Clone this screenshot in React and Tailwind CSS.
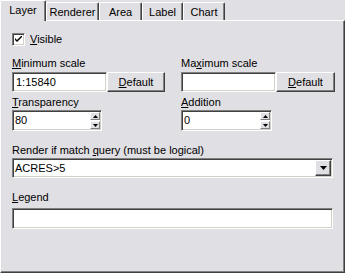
import React from 'react'

const sunken = 'border border-t-[#808080] border-l-[#808080] border-b-white border-r-white shadow-[inset_1px_1px_0_#404040,inset_-1px_-1px_0_#d4d0c8]'
const raised = 'border border-t-white border-l-white border-b-[#404040] border-r-[#404040] shadow-[inset_-1px_-1px_0_#808080]'

function U({ children }) {
  return <span className="underline underline-offset-[1px]">{children}</span>
}

function Tab({ label, active, w }) {
  if (active) {
    return (
      <div className={`relative z-10 h-[21px] ${w} bg-[#e0dfe3] border-l border-t border-l-white border-t-white border-r border-r-[#404040] shadow-[inset_-1px_0_0_#808080] rounded-tl-[2px] rounded-tr-[2px] flex justify-center pt-[3px]`}>
        {label}
      </div>
    )
  }
  return (
    <div className={`mt-[2px] h-[18px] ${w} bg-[#e0dfe3] border-l border-t border-l-white border-t-white border-r border-r-[#404040] shadow-[inset_-1px_0_0_#808080] rounded-tl-[2px] rounded-tr-[2px] flex justify-center pt-[3px]`}>
      {label}
    </div>
  )
}

function Button({ w, children }) {
  return (
    <div className={`h-[20px] ${w} bg-[#e0dfe3] ${raised} flex items-center justify-center`}>
      {children}
    </div>
  )
}

function SpinArrow({ up }) {
  return (
    <div className={`h-[8px] w-[10px] bg-[#e0dfe3] border border-t-white border-l-white border-b-[#808080] border-r-[#808080] flex items-center justify-center`}>
      <svg width="5" height="3" viewBox="0 0 5 3">
        {up ? <path d="M2.5 0 L5 3 L0 3 Z" fill="#000" /> : <path d="M0 0 L5 0 L2.5 3 Z" fill="#000" />}
      </svg>
    </div>
  )
}

function Spin({ w, value }) {
  return (
    <div className={`h-[21px] ${w} bg-white ${sunken} flex items-center pl-[2px]`}>
      <span className="flex-1">{value}</span>
      <div className="flex flex-col gap-[1px] mr-[1px]">
        <SpinArrow up />
        <SpinArrow />
      </div>
    </div>
  )
}

export default function App() {
  return (
    <div className="w-[345px] h-[273px] bg-[#e0dfe3] text-black text-[11px] leading-[13px] font-['Liberation_Sans',Arial,sans-serif] flex flex-col overflow-hidden">
      {/* Tabs */}
      <div className="flex items-start h-[21px] -mb-[1px] relative z-10">
        <Tab label="Layer" active w="w-[46px]" />
        <Tab label="Renderer" w="w-[53px]" />
        <Tab label="Area" w="w-[43px]" />
        <Tab label="Label" w="w-[41px]" />
        <Tab label="Chart" w="w-[42px]" />
      </div>

      {/* Panel */}
      <div className="flex-1 flex flex-col border border-t-white border-l-white border-r-[#404040] border-b-[#404040] shadow-[inset_-1px_-1px_0_#808080] pl-[11px]">
        <div className="mt-[12px] h-[13px] flex items-center gap-[5px]">
          <div className={`w-[13px] h-[13px] bg-white ${sunken} flex items-center justify-center`}>
            <svg width="7" height="7" viewBox="0 0 7 7">
              <path d="M0 2 L0 4 L2 6 L7 1 L7 -1 L2 4 Z" fill="#000" />
            </svg>
          </div>
          <span><U>V</U>isible</span>
        </div>

        <div className="flex mt-[11px]">
          <div className="w-[169px] flex flex-col">
            <span><U>M</U>inimum scale</span>
            <div className="flex mt-[2px]">
              <div className={`h-[20px] w-[95px] bg-white ${sunken} flex items-center pl-[3px]`}>1:15840</div>
              <Button w="w-[58px]"><span><U>D</U>efault</span></Button>
            </div>
            <span className="mt-[4px]"><U>T</U>ransparency</span>
            <div className="mt-[1px]">
              <Spin w="w-[90px]" value="80" />
            </div>
          </div>
          <div className="flex flex-col">
            <span>Ma<U>x</U>imum scale</span>
            <div className="flex mt-[2px]">
              <div className={`h-[20px] w-[95px] bg-white ${sunken}`}></div>
              <Button w="w-[59px]"><span><U>D</U>efault</span></Button>
            </div>
            <span className="mt-[4px]"><U>A</U>ddition</span>
            <div className="mt-[1px]">
              <Spin w="w-[91px]" value="0" />
            </div>
          </div>
        </div>

        <span className="mt-[13px]">Render if match <U>q</U>uery (must be logical)</span>
        <div className={`mt-[1px] h-[20px] w-[321px] bg-white ${sunken} flex items-center pl-[2px]`}>
          <span className="flex-1">ACRES&gt;5</span>
          <div className="w-[16px] h-[16px] mr-[1px] bg-[#e0dfe3] border border-t-white border-l-white border-b-[#404040] border-r-[#404040] shadow-[inset_-1px_-1px_0_#808080] flex items-center justify-center">
            <svg width="7" height="4" viewBox="0 0 7 4">
              <path d="M0 0 L7 0 L3.5 4 Z" fill="#000" />
            </svg>
          </div>
        </div>

        <span className="mt-[13px]"><U>L</U>egend</span>
        <div className={`mt-[4px] h-[21px] w-[321px] bg-white ${sunken}`}></div>
      </div>
    </div>
  )
}
